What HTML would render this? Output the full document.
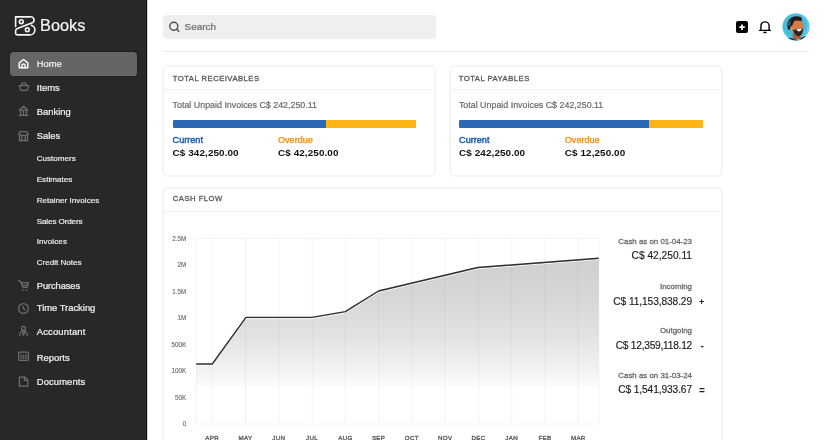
<!DOCTYPE html>
<html><head><meta charset="utf-8">
<style>
*{margin:0;padding:0;box-sizing:border-box}
html,body{width:825px;height:440px;overflow:hidden;background:#fff;font-family:"Liberation Sans",sans-serif}
body{will-change:transform}
.a{position:absolute;white-space:nowrap}
#side{position:absolute;left:0;top:0;width:147px;height:440px;background:#282828;border-right:1px solid #0e0e0e;box-shadow:1px 0 0 #d4d4d4}
.nav{color:#f2f2f2;font-size:9.4px;line-height:9.4px;-webkit-text-stroke:0.22px #f2f2f2}
.sub{color:#f0f0f0;font-size:8.1px;line-height:8.1px;-webkit-text-stroke:0.18px #f0f0f0}
svg{position:absolute;overflow:visible}
.ic{fill:none;stroke:#6e6e6e;stroke-width:1.25;stroke-linecap:round;stroke-linejoin:round}
.card{position:absolute;border:2px solid #f4f4f4;border-radius:6px;background:#fff}
.ch{color:#585858;font-size:7.7px;line-height:7.7px;letter-spacing:0.47px;-webkit-text-stroke:0.3px #585858}
.sep{position:absolute;height:1px;background:#f0f0f0}
.tu{color:#6a6a6a;font-size:8.9px;line-height:8.9px;-webkit-text-stroke:0.2px #6a6a6a}
.cur{color:#1a5cb0;font-size:9.1px;line-height:9.1px;-webkit-text-stroke:0.45px #1a5cb0}
.ovd{color:#f59a1e;font-size:9.1px;line-height:9.1px;-webkit-text-stroke:0.45px #f59a1e}
.amt{color:#111;font-weight:bold;font-size:9.9px;line-height:9.9px;letter-spacing:0.1px}
.yl{color:#6e6e6e;font-size:6.3px;line-height:6.3px;text-align:right;width:30px;-webkit-text-stroke:0.15px #6e6e6e}
.xl{color:#606060;font-size:6.2px;line-height:6.2px;text-align:center;width:30px;letter-spacing:0.35px;-webkit-text-stroke:0.35px #606060}
.rl{color:#6b6b6b;font-size:7.9px;line-height:7.9px;text-align:right;-webkit-text-stroke:0.3px #6b6b6b}
.rv{color:#1c1c1c;font-size:10.2px;line-height:10.2px;text-align:right;-webkit-text-stroke:0.15px #1c1c1c}
</style></head><body>
<div id="side">
  <!-- logo -->
  <svg style="left:10px;top:10px" width="30" height="30" viewBox="0 0 30 30">
    <g fill="none" stroke="#f6f6f6" stroke-width="1.6" stroke-linecap="round" stroke-linejoin="round">
      <path d="M5.6 16.6 V6.9 H20 A3.3 3.3 0 0 1 22.9 12.6 L7.4 18.6 A2.6 2.6 0 0 0 5.6 21.1 V23.3 A1.6 1.6 0 0 0 7.2 24.9 H19.5 A4.9 4.9 0 0 0 21.3 15.3"/>
      <circle cx="11.3" cy="11.7" r="1.9"/>
      <circle cx="17.3" cy="19.8" r="1.9"/>
    </g>
  </svg>
  <div class="a" style="left:40.1px;top:17.1px;font-size:16.3px;line-height:16.3px;color:#f4f4f4;-webkit-text-stroke:0.2px #f4f4f4">Books</div>

  <div style="position:absolute;left:10px;top:52px;width:127px;height:24px;background:#656565;border-radius:4px;box-shadow:0 0 0 1px #202020,inset 0 -1px 0 #6e6e6e"></div>
  <!-- home icon -->
  <svg style="left:0;top:0" width="1" height="1">
    <g fill="none" stroke="#fafafa" stroke-width="1.5" stroke-linejoin="round" stroke-linecap="round">
      <path d="M19.2 62.8 L23.5 59.5 L27.8 62.8 V67.8 H19.2 Z"/>
      <path d="M21.9 67.8 V65.5 A1.6 1.6 0 0 1 25.1 65.5 V67.8"/>
    </g>
  </svg>
  <div class="a nav" style="left:36.8px;top:59.1px">Home</div>

  <!-- items icon -->
  <svg style="left:0;top:0" width="1" height="1"><g class="ic">
    <path d="M19.3 85.6 H28.7 L27.2 89.9 Q27 90.4 26.5 90.4 H21.5 Q21 90.4 20.8 89.9 Z"/>
    <path d="M21.3 85.4 Q21.5 82.9 23.9 82.9 Q26.3 82.9 26.5 85.4"/>
  </g></svg>
  <div class="a nav" style="left:36.8px;top:83.2px">Items</div>

  <!-- banking icon -->
  <svg style="left:0;top:0" width="1" height="1"><g class="ic">
    <path d="M19.2 110.2 L23.5 106.2 L27.8 110.2 Z"/>
    <path d="M20.6 111.2 V114.4 M23.5 111.2 V114.4 M26.4 111.2 V114.4"/>
    <path d="M19.1 115.4 H27.9"/>
  </g></svg>
  <div class="a nav" style="left:36.8px;top:107.2px">Banking</div>

  <!-- sales icon -->
  <svg style="left:0;top:0" width="1" height="1"><g class="ic">
    <path d="M20.2 131.6 H26.8 L28.4 134.3 Q27.4 135.6 25.9 134.8 Q24.9 135.9 23.5 135.2 Q22.1 135.9 21.1 134.8 Q19.6 135.6 18.6 134.3 Z"/>
    <path d="M19.5 135.2 V140.6 H27.5 V135.2"/>
    <path d="M21.8 140.6 V136.4 M25.2 140.6 V136.4"/>
  </g></svg>
  <div class="a nav" style="left:36.8px;top:131.4px">Sales</div>

  <div class="a sub" style="left:36.7px;top:154.8px">Customers</div>
  <div class="a sub" style="left:36.7px;top:175.6px">Estimates</div>
  <div class="a sub" style="left:36.7px;top:196.7px">Retainer Invoices</div>
  <div class="a sub" style="left:36.7px;top:217.6px;letter-spacing:-0.12px">Sales Orders</div>
  <div class="a sub" style="left:36.7px;top:238.1px;letter-spacing:0.08px">Invoices</div>
  <div class="a sub" style="left:36.7px;top:259.4px">Credit Notes</div>

  <!-- purchases -->
  <svg style="left:0;top:0" width="1" height="1"><g class="ic">
    <path d="M18.4 280.4 Q20.4 280.6 20.9 282.2 L22.8 287.4 H27.2 L28.4 282.6 H21.3"/>
    <path d="M22.2 285 H27.8"/>
    <circle cx="22.7" cy="290.2" r="0.35" stroke-width="1.1"/><circle cx="26.4" cy="290.2" r="0.35" stroke-width="1.1"/>
  </g></svg>
  <div class="a nav" style="left:36.8px;top:280.6px;letter-spacing:-0.12px">Purchases</div>

  <!-- time -->
  <svg style="left:0;top:0" width="1" height="1"><g class="ic">
    <circle cx="23.5" cy="308.5" r="4.9"/>
    <path d="M23.3 306.3 V308.4 L24.8 309.6"/>
  </g></svg>
  <div class="a nav" style="left:36.8px;top:303.4px">Time Tracking</div>

  <!-- accountant -->
  <svg style="left:0;top:0" width="1" height="1"><g class="ic">
    <circle cx="23.5" cy="328.4" r="2"/>
    <path d="M19.7 335.8 V335 A3.8 3.8 0 0 1 27.3 335 V335.8"/>
    <path d="M22.4 332.2 L23.5 335.2 L24.6 332.2"/>
  </g></svg>
  <div class="a nav" style="left:36.8px;top:327.4px;letter-spacing:0.18px">Accountant</div>

  <!-- reports -->
  <svg style="left:0;top:0" width="1" height="1"><g class="ic">
    <rect x="18.6" y="352" width="9.8" height="8.4" rx="1"/>
    <path d="M21.1 358.6 V354.6 M23.5 358.6 V355.6 M25.9 358.6 V354.6"/>
  </g></svg>
  <div class="a nav" style="left:36.8px;top:352.8px">Reports</div>

  <!-- documents -->
  <svg style="left:0;top:0" width="1" height="1"><g class="ic">
    <path d="M19.4 377 H24.8 L27.8 380 V386.2 H19.4 Z"/>
    <path d="M24.4 377.2 V380.4 H27.6"/>
  </g></svg>
  <div class="a nav" style="left:36.8px;top:377.1px;letter-spacing:0.12px">Documents</div>
</div>

<!-- header -->
<div style="position:absolute;left:163px;top:15px;width:272.5px;height:23.5px;background:#efefef;border-radius:4px"></div>
<svg style="left:0;top:0" width="1" height="1"><g fill="none" stroke="#4a4a4a" stroke-width="1.4" stroke-linecap="round">
  <circle cx="173.8" cy="26.2" r="4"/><path d="M176.8 29.2 L178.8 31.2"/>
</g></svg>
<div class="a" style="left:184.6px;top:22.1px;font-size:9.9px;line-height:9.9px;color:#6a6a6a;-webkit-text-stroke:0.2px #6a6a6a">Search</div>
<div class="sep" style="left:163px;top:51px;width:646px;background:#ececec"></div>

<div style="position:absolute;left:736px;top:21px;width:12px;height:12px;background:#050505;border-radius:2px"></div>
<svg style="left:0;top:0" width="1" height="1"><g stroke="#fff" stroke-width="1.7">
  <path d="M739.3 27.2 H744.8 M742 24.5 V29.9"/>
</g></svg>
<svg style="left:0;top:0" width="1" height="1"><g fill="none" stroke="#050505" stroke-width="1.4" stroke-linecap="round">
  <path d="M760.9 30.2 V26 A4.1 4.1 0 0 1 769.1 26 V30.2"/>
  <path d="M759.6 30.4 H770.4"/>
  <path d="M763.9 32.5 H766.1" stroke-width="1.3"/>
</g></svg>
<!-- avatar -->
<svg style="left:782px;top:13px" width="28" height="28" viewBox="0 0 440 440">
  <defs><clipPath id="cc"><circle cx="220" cy="218" r="214"/></clipPath>
  <radialGradient id="bgg" cx="0.45" cy="0.45" r="0.55"><stop offset="0.72" stop-color="#45bcdc"/><stop offset="1" stop-color="#6dd0e9"/></radialGradient></defs>
  <circle cx="220" cy="218" r="214" fill="url(#bgg)"/>
  <g clip-path="url(#cc)">
    <path d="M60 440 L90 390 Q150 380 200 410 Q260 420 320 380 Q350 360 380 370 L400 440 Z" fill="#1b4268"/>
    <path d="M200 440 Q220 405 260 410 Q300 410 310 440 Z" fill="#74cfe8"/>
    <path d="M165 320 L290 330 L295 405 Q240 420 175 400 Z" fill="#b85e2c"/>
    <path d="M190 120 Q250 95 300 115 Q330 160 335 230 Q335 290 310 335 Q270 370 235 360 Q195 335 170 290 Q150 230 160 180 Q170 140 190 120 Z" fill="#d77b42"/>
    <path d="M125 215 Q150 200 170 230 Q175 270 150 280 Q125 260 125 215 Z" fill="#d98a55"/>
    <path d="M170 260 Q180 320 225 355 Q265 380 305 340 Q335 300 332 245 Q305 235 275 240 Q235 245 210 265 Q190 270 170 260 Z" fill="#2e2622"/>
    <path d="M225 258 Q265 235 315 245 Q310 280 270 292 Q240 285 225 258 Z" fill="#f5f1ea"/>
    <path d="M85 200 Q75 120 150 70 Q220 40 285 60 Q330 85 305 128 Q250 110 205 120 Q175 135 165 190 Q160 215 150 200 Q130 215 125 250 Q105 280 90 250 Z" fill="#1e1e1e"/>
    <path d="M95 190 Q100 130 140 100 Q125 150 130 200 Q110 215 95 190 Z" fill="#5e5e5e"/>
  </g>
</svg>

<!-- receivables card -->
<div class="card" style="left:162px;top:65px;width:274px;height:112px"></div>
<div class="sep" style="left:164px;top:89px;width:270px"></div>
<div class="a ch" style="left:172.8px;top:75.2px">TOTAL RECEIVABLES</div>
<div class="a tu" style="left:172.6px;top:101.2px">Total Unpaid Invoices C$ 242,250.11</div>
<div style="position:absolute;left:172.6px;top:120px;width:243.6px;height:8px;background:linear-gradient(90deg,#2b69b5 0,#2b69b5 152.9px,#fcb515 152.9px);border-radius:1px"></div>
<div class="a cur" style="left:172.6px;top:135.6px">Current</div>
<div class="a ovd" style="left:278px;top:135.6px">Overdue</div>
<div class="a amt" style="left:172.6px;top:148.3px">C$ 342,250.00</div>
<div class="a amt" style="left:278px;top:148.3px">C$ 42,250.00</div>

<!-- payables card -->
<div class="card" style="left:449px;top:65px;width:274px;height:112px"></div>
<div class="sep" style="left:451px;top:89px;width:270px"></div>
<div class="a ch" style="left:458.8px;top:75.2px">TOTAL PAYABLES</div>
<div class="a tu" style="left:458.9px;top:101.2px">Total Unpaid Invoices C$ 242,250.11</div>
<div style="position:absolute;left:458.6px;top:120px;width:244px;height:8px;background:linear-gradient(90deg,#2b69b5 0,#2b69b5 190.2px,#fcb515 190.2px);border-radius:1px"></div>
<div class="a cur" style="left:459.1px;top:135.6px">Current</div>
<div class="a ovd" style="left:564.8px;top:135.6px">Overdue</div>
<div class="a amt" style="left:459.1px;top:148.3px">C$ 242,250.00</div>
<div class="a amt" style="left:564.8px;top:148.3px">C$ 12,250.00</div>

<!-- cash flow card -->
<div class="card" style="left:162px;top:187px;width:561px;height:270px"></div>
<div class="sep" style="left:164px;top:210.5px;width:557px"></div>
<div class="a ch" style="left:172.8px;top:195.2px">CASH FLOW</div>

<svg style="left:0;top:0" width="1" height="1">
  <defs>
    <linearGradient id="g1" x1="0" y1="258" x2="0" y2="390" gradientUnits="userSpaceOnUse">
      <stop offset="0" stop-color="#d0cece"/>
      <stop offset="0.35" stop-color="#d9d8d8"/>
      <stop offset="0.62" stop-color="#e4e4e4"/>
      <stop offset="0.84" stop-color="#f2f2f2"/>
      <stop offset="0.968" stop-color="#fbfbfb"/>
      <stop offset="0.975" stop-color="#ffffff"/>
      <stop offset="1" stop-color="#ffffff"/>
    </linearGradient>
  </defs>
  <path d="M196.3 364 L212.3 364 L246 317.4 L312 317.4 L345.3 311.6 L378.5 291 L477.7 267.5 L598.8 258.2 L598.8 424 L196.3 424 Z" fill="url(#g1)"/>
  <g stroke="rgba(0,0,0,0.045)" stroke-width="1" fill="none">
    <path d="M196.5 238.5 H598.8 M196.5 238.5 V424 M598.8 238.5 V424 M196.5 424 H598.8"/>
    <path d="M212.2 238.5 V424 M245.5 238.5 V424 M278.8 238.5 V424 M312.1 238.5 V424 M345.4 238.5 V424 M378.6 238.5 V424 M411.9 238.5 V424 M445.2 238.5 V424 M478.5 238.5 V424 M511.7 238.5 V424 M545 238.5 V424 M578.3 238.5 V424"/>
  </g>
  <path d="M196.3 365.3 L212.3 365.3 L246 318.7 L312 318.7 L345.3 312.9 L378.5 292.3 L477.7 268.8 L598.8 259.5" fill="none" stroke="#ffffff" stroke-width="0.9" stroke-linejoin="round" opacity="0.9"/>
  <path d="M196.3 364 L212.3 364 L246 317.4 L312 317.4 L345.3 311.6 L378.5 291 L477.7 267.5 L598.8 258.2" fill="none" stroke="#2e2e2e" stroke-width="1.4" stroke-linejoin="round"/>
</svg>
<div class="a yl" style="left:156.2px;top:236.0px">2.5M</div>
<div class="a yl" style="left:156.2px;top:261.9px">2M</div>
<div class="a yl" style="left:156.2px;top:288.9px">1.5M</div>
<div class="a yl" style="left:156.2px;top:315.4px">1M</div>
<div class="a yl" style="left:156.2px;top:341.8px">500K</div>
<div class="a yl" style="left:156.2px;top:368.3px">100K</div>
<div class="a yl" style="left:156.2px;top:394.7px">50K</div>
<div class="a yl" style="left:156.2px;top:421.2px">0</div>

<div class="a xl" style="left:197.2px;top:434.7px">APR</div>
<div class="a xl" style="left:230.5px;top:434.7px">MAY</div>
<div class="a xl" style="left:263.8px;top:434.7px">JUN</div>
<div class="a xl" style="left:297.1px;top:434.7px">JUL</div>
<div class="a xl" style="left:330.4px;top:434.7px">AUG</div>
<div class="a xl" style="left:363.6px;top:434.7px">SEP</div>
<div class="a xl" style="left:396.9px;top:434.7px">OCT</div>
<div class="a xl" style="left:430.2px;top:434.7px">NOV</div>
<div class="a xl" style="left:463.5px;top:434.7px">DEC</div>
<div class="a xl" style="left:496.7px;top:434.7px">JAN</div>
<div class="a xl" style="left:530px;top:434.7px">FEB</div>
<div class="a xl" style="left:563.3px;top:434.7px">MAR</div>

<div class="a rl" style="right:133px;top:238.1px">Cash as on 01-04-23</div>
<div class="a rv" style="right:133px;top:250.5px">C$ 42,250.11</div>
<div class="a rl" style="right:133px;top:283px">Incoming</div>
<div class="a rv" style="right:133px;top:296.9px;letter-spacing:-0.1px">C$ 11,153,838.29</div>
<div class="a rl" style="right:133px;top:326.8px">Outgoing</div>
<div class="a rv" style="right:133px;top:341px;letter-spacing:-0.25px">C$ 12,359,118.12</div>
<div class="a rl" style="right:133px;top:371.7px">Cash as on 31-03-24</div>
<div class="a rv" style="right:133px;top:385px;letter-spacing:-0.1px">C$ 1,541,933.67</div>
<div class="a" style="left:699px;top:298px;font-size:9px;line-height:9px;color:#222;font-weight:bold">+</div>
<div class="a" style="left:700.5px;top:341px;font-size:10px;line-height:10px;color:#222;font-weight:bold">-</div>
<div class="a" style="left:699px;top:386px;font-size:10px;line-height:10px;color:#222;font-weight:bold">=</div>
</body></html>
